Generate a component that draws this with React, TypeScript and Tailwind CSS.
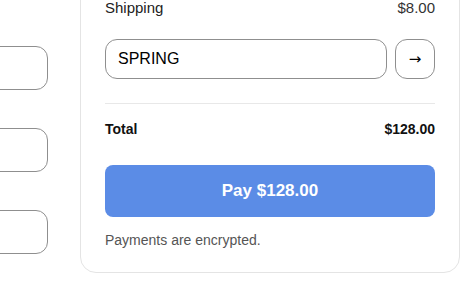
import React from 'react';

const fields = ["name", "address", "card"];

const App: React.FC = () => {
  return (
    <div className="min-h-screen bg-white overflow-hidden font-['Liberation_Sans',Arial,sans-serif]">
      <div className="flex gap-8 -mt-[30px] -ml-[252px]">
        <div className="w-[300px] shrink-0 pt-[76px] flex flex-col gap-[38px]">
          {fields.map(f => (
            <div key={f} className="h-11 rounded-xl border border-[#8f8f8f] bg-white" />
          ))}
        </div>
        <div className="w-[380px] shrink-0 rounded-2xl border border-[#e4e4e4] bg-white px-6 pt-[29px] pb-[22px]">
          <div className="flex justify-between text-[15px] leading-[15px] text-[#222]">
            <span>Shipping</span>
            <span className="text-[#333]">$8.00</span>
          </div>
          <div className="mt-6 flex gap-2">
            <div className="h-10 flex-1 rounded-xl border border-[#8f8f8f] px-3 flex items-center text-base text-black">SPRING</div>
            <button className="h-10 w-10 rounded-xl border border-[#8f8f8f] bg-white flex items-center justify-center font-['DejaVu_Sans',sans-serif] text-[15px] text-black">→</button>
          </div>
          <div className="mt-6 border-t border-[#e8e8e8]" />
          <div className="mt-[15px] flex justify-between text-sm leading-5 font-bold text-[#111]">
            <span>Total</span>
            <span>$128.00</span>
          </div>
          <button className="mt-[26px] h-[52px] w-full rounded-lg bg-[#5b8ce6] text-[17px] font-bold text-white">Pay $128.00</button>
          <p className="mt-[13px] text-sm leading-5 text-[#555]">Payments are encrypted.</p>
        </div>
      </div>
    </div>
  );
};

export default App;
